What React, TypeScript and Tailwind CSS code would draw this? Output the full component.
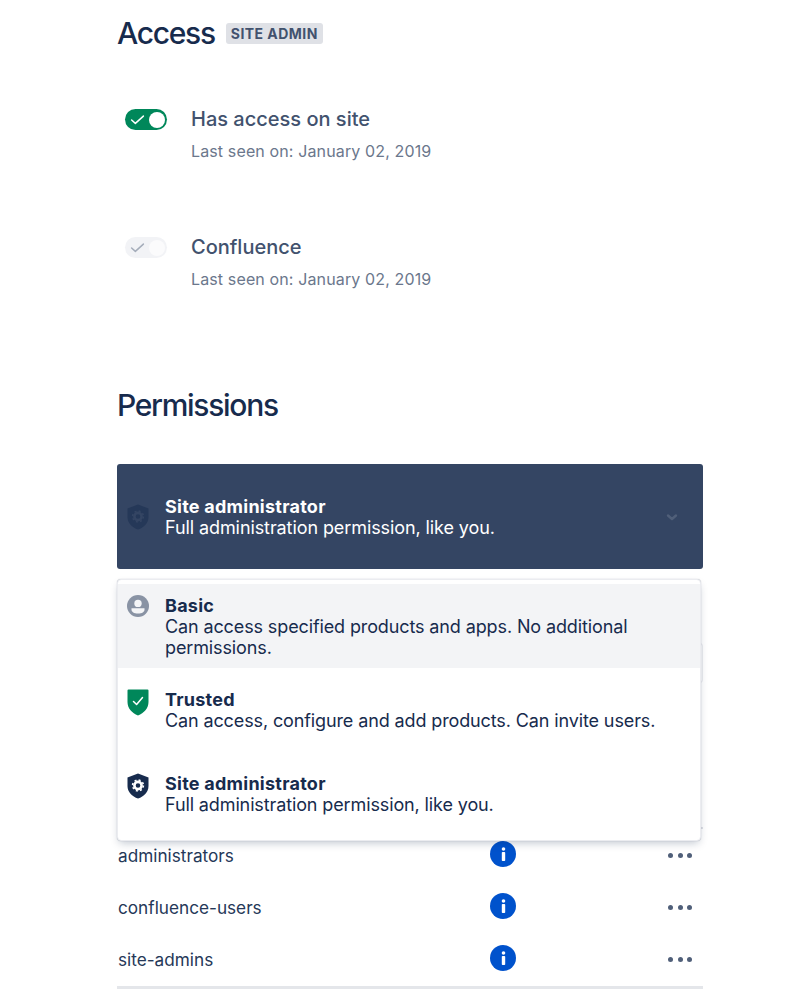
const F = "font-['Inter',sans-serif]";

function Toggle({ on }: { on: boolean }) {
  return (
    <div className={`flex h-[21px] w-[42px] shrink-0 items-center justify-between rounded-full pl-[5px] pr-[2.5px] ${on ? "bg-[#00875a]" : "bg-[#f2f3f6]"}`}>
      <svg width="15" height="15" viewBox="0 0 14 14" fill="none">
        <path d="M1.5 7.5 L5 10.6 L12.5 3.8" stroke={on ? "#ffffff" : "#a5adba"} strokeWidth="1.4" strokeLinecap="round" strokeLinejoin="round" />
      </svg>
      <div className={`h-4 w-4 rounded-full ${on ? "bg-white" : "bg-[#fbfbfc]"}`} />
    </div>
  );
}

function AccessRow({ on, title }: { on: boolean; title: string }) {
  return (
    <div className="flex h-[128px] items-start pl-2">
      <div className="pt-[2px]"><Toggle on={on} /></div>
      <div className="ml-[24px]">
        <div className="text-[20px] font-medium leading-[24px] text-[#42526e]">{title}</div>
        <div className="mt-[10px] text-[16px] leading-[20px] tracking-[0.13px] text-[#6b778c]">Last seen on: January 02, 2019</div>
      </div>
    </div>
  );
}

function Shield({ fill, gear }: { fill: string; gear: string }) {
  return (
    <svg width="22" height="26" viewBox="0 0 22 26">
      <path d="M11 0.5 L21.5 4.5 V13 C21.5 19 17 23.5 11 25.5 C5 23.5 0.5 19 0.5 13 V4.5 Z" fill={fill} />
      <circle cx="11" cy="12.5" r="3.6" fill="none" stroke={gear} strokeWidth="2.6" />
      <circle cx="11" cy="12.5" r="5.4" fill="none" stroke={gear} strokeWidth="1.6" strokeDasharray="2 2.24" />
    </svg>
  );
}

function TrustedShield() {
  return (
    <svg width="22" height="27" viewBox="0 0 22 27">
      <path d="M1.5 0.5 H20.5 A1 1 0 0 1 21.5 1.5 V13 C21.5 19.5 17 24 11 26.5 C5 24 0.5 19.5 0.5 13 V1.5 A1 1 0 0 1 1.5 0.5 Z" fill="#00875a" />
      <path d="M6.5 12.5 L9.6 15.5 L15.5 8.5" fill="none" stroke="#ffffff" strokeWidth="1.5" strokeLinecap="round" strokeLinejoin="round" />
    </svg>
  );
}

function UserIcon() {
  return (
    <svg width="22" height="22" viewBox="0 0 22 22">
      <circle cx="11" cy="11" r="11" fill="#8993a4" />
      <circle cx="11" cy="8.4" r="3.7" fill="#f4f5f7" />
      <path d="M4.5 13.2 H17.5 V14.5 C17.5 17 15 18.5 11 18.5 C7 18.5 4.5 17 4.5 14.5 Z" fill="#f4f5f7" />
    </svg>
  );
}

function MenuItem({ icon, title, desc, className }: { icon: React.ReactNode; title: string; desc: string; className: string }) {
  return (
    <div className={`flex pl-[9px] pr-[10px] ${className}`}>
      <div className="w-[38px] shrink-0">{icon}</div>
      <div className="text-[18px] leading-[21px] tracking-[-0.12px] text-[#172b4d]">
        <div className="font-bold tracking-[0.25px]">{title}</div>
        <div>{desc}</div>
      </div>
    </div>
  );
}

function InfoIcon() {
  return (
    <div className="mb-[2px] flex h-[26px] w-[26px] items-center justify-center rounded-full bg-[#0052cc]">
      <svg width="5" height="14" viewBox="0 0 5 14">
        <circle cx="2.5" cy="2" r="1.8" fill="#fff" />
        <rect x="0.8" y="5" width="3.4" height="9" rx="0.8" fill="#fff" />
      </svg>
    </div>
  );
}

function Row({ name }: { name: string }) {
  return (
    <div className="flex h-[52px] items-center text-[17.2px] text-[#253858]">
      <div className="w-[373px] pl-[1px] pt-[2px]">{name}</div>
      <InfoIcon />
      <div className="ml-auto mr-[11px] flex gap-[4.5px]">
        <span className="h-[5px] w-[5px] rounded-full bg-[#505f79]" />
        <span className="h-[5px] w-[5px] rounded-full bg-[#505f79]" />
        <span className="h-[5px] w-[5px] rounded-full bg-[#505f79]" />
      </div>
    </div>
  );
}

export default function App() {
  return (
    <div className={`${F} h-[999px] w-[796px] overflow-hidden bg-white pl-[117px]`}>
      <div className="w-[586px]">
        <div className="flex h-[67px] items-center pb-[1px]">
          <h1 className="text-[30px] font-medium tracking-[-1.3px] text-[#172b4d]">Access</h1>
          <span className="ml-[11px] mt-[1px] rounded-[3px] bg-[#dfe1e6] px-[5px] text-[14px] font-bold leading-[21px] tracking-[0.45px] text-[#42526e]">SITE ADMIN</span>
        </div>
        <div className="pt-[40px]">
          <AccessRow on title="Has access on site" />
          <AccessRow on={false} title="Confluence" />
        </div>
        <h2 className="mt-[22px] text-[30px] font-medium leading-[40px] tracking-[-1.3px] text-[#172b4d]">Permissions</h2>
        <div className="relative mt-[39px]">
          <div className="flex h-[105px] items-center rounded-[3px] bg-[#344563] pl-[10px] pr-[22px]">
            <div className="w-[38px] shrink-0"><Shield fill="#253858" gear="#344563" /></div>
            <div className="text-[18px] leading-[21px] tracking-[-0.09px] text-white">
              <div className="font-bold tracking-[0.25px]">Site administrator</div>
              <div>Full administration permission, like you.</div>
            </div>
            <svg className="ml-auto" width="18" height="18" viewBox="0 0 18 18" fill="none">
              <path d="M5 7.5 L9 11 L13 7.5" stroke="#505f79" strokeWidth="2.4" strokeLinecap="round" strokeLinejoin="round" />
            </svg>
          </div>
          <div className="absolute left-0 top-[115px] z-10 h-[262px] w-[584px] rounded-[4px] border border-[#ebecf0] bg-white pt-[4px] shadow-[0_4px_8px_-2px_rgba(9,30,66,0.25),0_0_1px_rgba(9,30,66,0.31)]">
            <MenuItem className="h-[84px] bg-[#f3f4f6] pt-[11px]" icon={<UserIcon />} title="Basic" desc="Can access specified products and apps. No additional permissions." />
            <MenuItem className="h-[84px] pt-[21px]" icon={<TrustedShield />} title="Trusted" desc="Can access, configure and add products. Can invite users." />
            <MenuItem className="h-[84px] pt-[21px]" icon={<Shield fill="#172b4d" gear="#ffffff" />} title="Site administrator" desc="Full administration permission, like you." />
          </div>
        </div>
        <div className="h-[260px] border-b-2 border-[#dfe1e6] pt-[74px]">
          <div className="h-[40px] rounded-[3px] border border-[#ebecf0]" />
        </div>
        <div className="border-b-[3px] border-[#e4e6ea] pb-[1px]">
          <Row name="administrators" />
          <Row name="confluence-users" />
          <Row name="site-admins" />
        </div>
      </div>
    </div>
  );
}
